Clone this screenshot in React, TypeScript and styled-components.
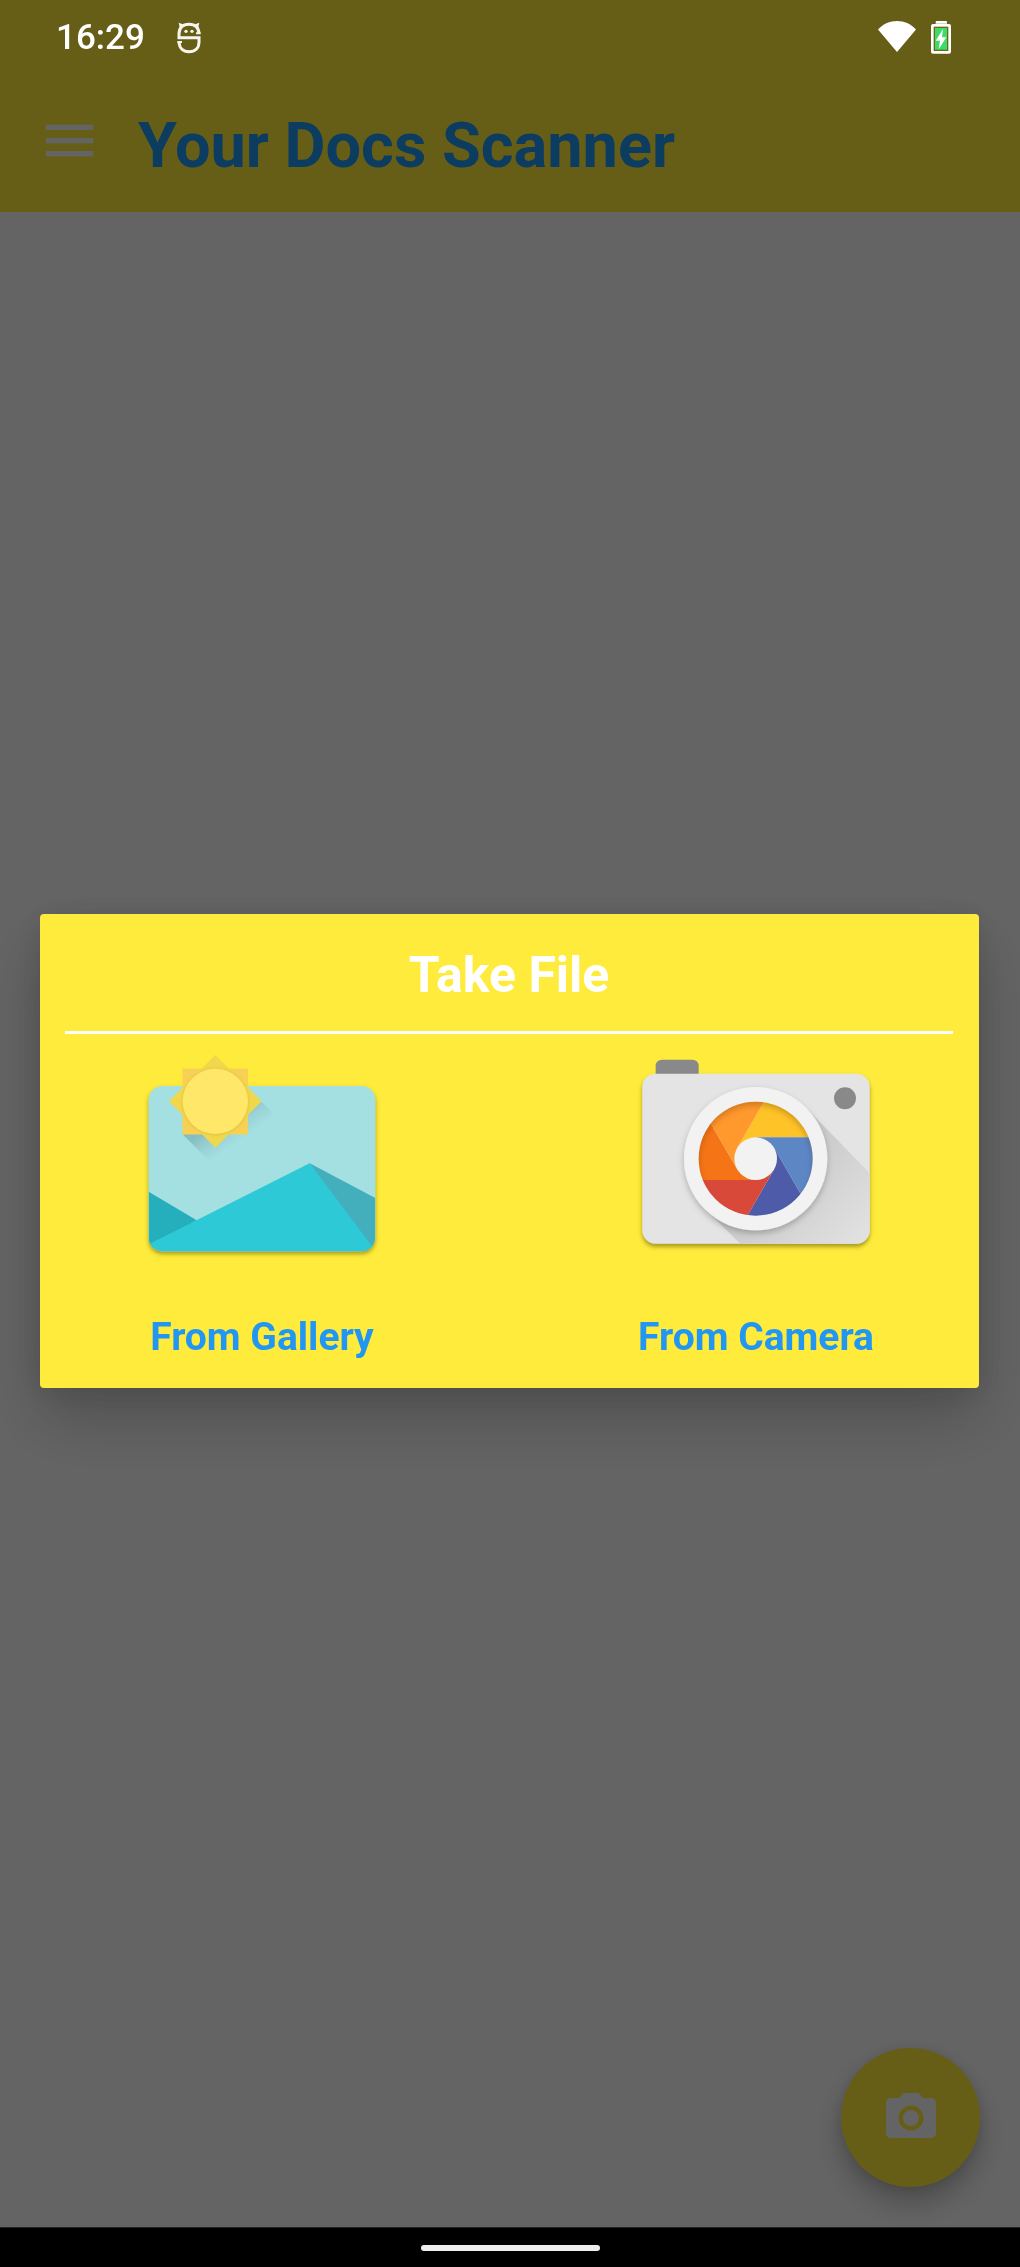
import React from "react";
import styled, { createGlobalStyle } from "styled-components";

const GlobalStyle = createGlobalStyle`
  *, *::before, *::after { box-sizing: border-box; }
  body { margin: 0; background: #000; font-family: Roboto, "Noto Sans", sans-serif; }
  button { font: inherit; border: 0; padding: 0; background: none; color: inherit; cursor: pointer; }
  svg { display: block; flex: none; }
`;

const Screen = styled.div`
  min-height: 100vh;
  display: flex;
  flex-direction: column;
  background: #fafafa;
`;

const Header = styled.header`
  background: #ffeb3b;
`;

const StatusBar = styled.div`
  position: relative;
  z-index: 3;
  height: 75px;
  padding: 0 69px 0 56px;
  display: flex;
  align-items: center;
  justify-content: space-between;
  color: #fff;
`;

const StatusGroup = styled.div<{ $gap: number }>`
  display: flex;
  align-items: center;
  gap: ${(p) => p.$gap}px;
`;

const Clock = styled.time`
  font-size: 35px;
  line-height: 42px;
  font-weight: 500;
`;

const Toolbar = styled.div`
  display: flex;
  align-items: flex-start;
  gap: 37px;
  padding: 34px 38px 29px;
`;

const MenuButton = styled.button`
  color: #fafafa;
`;

const AppTitle = styled.h1`
  margin: 0;
  font-size: 63px;
  line-height: 74px;
  font-weight: 700;
  color: #2196f3;
`;

const Main = styled.main`
  flex: 1;
  display: flex;
  align-items: flex-end;
  justify-content: flex-end;
  padding: 40px;
`;

const Fab = styled.button`
  width: 139px;
  height: 139px;
  border-radius: 50%;
  display: flex;
  align-items: center;
  justify-content: center;
  background: #ffeb3b;
  color: #fafafa;
  box-shadow: 0 16px 28px rgba(0, 0, 0, 0.24), 0 2px 12px rgba(0, 0, 0, 0.1);
`;

const NavBar = styled.footer`
  position: relative;
  z-index: 3;
  height: 40px;
  display: flex;
  align-items: center;
  justify-content: center;
  background: #000;
  border-top: 1px solid #222;
`;

const HomeHandle = styled.span`
  width: 179px;
  height: 6px;
  border-radius: 3px;
  background: #eee;
`;

const Scrim = styled.div`
  position: fixed;
  inset: 0;
  z-index: 2;
  display: flex;
  align-items: center;
  justify-content: center;
  padding: 75px 41px 40px 40px;
  background: rgba(0, 0, 0, 0.6);
`;

const Dialog = styled.section`
  width: 100%;
  padding: 31px 26px 27px 25px;
  border-radius: 4px;
  background: #ffeb3b;
  box-shadow: 0 32px 64px rgba(0, 0, 0, 0.2), 0 4px 32px rgba(0, 0, 0, 0.12);
`;

const DialogTitle = styled.h2`
  margin: 0;
  padding-bottom: 26px;
  border-bottom: 3px solid #fff;
  font-size: 50px;
  line-height: 60px;
  font-weight: 700;
  text-align: center;
  color: #fff;
`;

const Options = styled.div`
  display: grid;
  grid-template-columns: 1fr 1fr;
  column-gap: 100px;
  padding-top: 6px;
`;

const Option = styled.button`
  display: flex;
  flex-direction: column;
  align-items: center;
  gap: 33px;
`;

const OptionLabel = styled.span`
  font-size: 39px;
  line-height: 48px;
  font-weight: 700;
  color: #2196f3;
`;

const MenuIcon = () => (
  <svg width="63" height="63" viewBox="0 0 24 24" fill="currentColor" aria-hidden="true">
    <path d="M3 18h18v-2H3v2zm0-5h18v-2H3v2zm0-7v2h18V6H3z" />
  </svg>
);

const PhotoIcon = () => (
  <svg width="60" height="60" viewBox="0 0 24 24" fill="currentColor" aria-hidden="true">
    <circle cx="12" cy="12" r="3.2" />
    <path d="M9 2 7.17 4H4c-1.1 0-2 .9-2 2v12c0 1.1.9 2 2 2h16c1.1 0 2-.9 2-2V6c0-1.1-.9-2-2-2h-3.17L15 2H9zm3 15c-2.76 0-5-2.24-5-5s2.24-5 5-5 5 2.24 5 5-2.24 5-5 5z" />
  </svg>
);

const MascotIcon = () => (
  <svg width="24" height="32" viewBox="0 0 72 96" fill="none" stroke="#f7f6ec" strokeWidth="9" aria-hidden="true">
    <path d="M66 35C65 17 54 7 36 7S7 17 6 35V47H66V60C66 78 54 89 36 89S7 78 6 60" />
    <path d="M57 34h14M1 60h14" strokeWidth="6" />
    <path d="M5 2 22 8 9 20zM67 2 50 8 63 20z" fill="#f7f6ec" stroke="none" />
    <circle cx="27" cy="28" r="5" fill="#f7f6ec" stroke="none" />
    <circle cx="45" cy="28" r="5" fill="#f7f6ec" stroke="none" />
  </svg>
);

const WifiIcon = () => (
  <svg width="38" height="34" viewBox="0 0 38 34" fill="#fff" aria-hidden="true">
    <path d="M0 8.500C5.500 2.800 11.500 0 19 0s13.500 2.800 19 8.500L19 31z" />
  </svg>
);

const BatteryIcon = () => (
  <svg width="20" height="34" viewBox="0 3 60 102" aria-hidden="true">
    <path d="M14 11V6q0-3 4-3h26q4 0 4 3v5z" fill="#fff" />
    <rect x="0" y="12" width="60" height="89" rx="6" fill="#fff" />
    <rect x="8" y="20" width="44" height="73" fill="#6d6a18" />
    <rect x="12" y="24" width="36" height="65" fill="#3ddc6a" />
    <path d="M36 27 14 62h13l-4 26 23-36H33z" fill="#fff" />
  </svg>
);

const GalleryArt = () => (
  <svg width="280" height="240" viewBox="7 0 840 720" aria-hidden="true">
    <defs>
      <clipPath id="photo">
        <rect x="87" y="138" width="680" height="496" rx="42" />
      </clipPath>
      <linearGradient id="sunShade" gradientUnits="userSpaceOnUse" x1="308" y1="234" x2="358" y2="304">
        <stop offset="0" stopColor="#5f8f96" stopOpacity="0.42" />
        <stop offset="0.5" stopColor="#5f8f96" stopOpacity="0.16" />
        <stop offset="1" stopColor="#5f8f96" stopOpacity="0" />
      </linearGradient>
      <filter id="photoShadow" x="-10%" y="-10%" width="120%" height="125%">
        <feDropShadow dx="0" dy="8" stdDeviation="7" floodColor="#5b5200" floodOpacity="0.55" />
      </filter>
      <filter id="discShadow" x="-10%" y="-10%" width="120%" height="120%">
        <feDropShadow dx="0" dy="1" stdDeviation="4" floodColor="#a87d10" floodOpacity="0.35" />
      </filter>
    </defs>
    <rect x="87" y="138" width="680" height="496" rx="42" fill="#a4dfe2" filter="url(#photoShadow)" />
    <g clipPath="url(#photo)">
      <path d="M190 284 300 394 510 270 426 185z" fill="url(#sunShade)" />
      <path d="M87 455 231 541 87 634z" fill="#25aebc" />
      <path d="M570 370 767 474V634H740z" fill="#44afbc" />
      <path d="M570 370 87 613V640H767V632z" fill="#2dc9d6" />
    </g>
    <rect x="189" y="86" width="196" height="197" fill="#f7d154" />
    <path d="M287 45 426 184 287 323 148 184z" fill="#f1d74b" />
    <path d="M189 143V86h57zM328 86h57v57zM385 226v57h-57zM246 283h-57v-57z" fill="#f7d154" />
    <circle cx="287" cy="184" r="98" fill="#ffe769" filter="url(#discShadow)" />
  </svg>
);

const BLADES = ["#fec327", "#5c87c4", "#4e5ba8", "#d9493a", "#f47416", "#ff982d"];

const CameraArt = () => (
  <svg width="280" height="240" viewBox="-8 0 840 720" aria-hidden="true">
    <defs>
      <clipPath id="body">
        <rect x="71" y="101" width="682" height="510" rx="40" />
      </clipPath>
      <clipPath id="aperture">
        <circle cx="411" cy="356" r="171" />
      </clipPath>
      <linearGradient id="longShade" gradientUnits="userSpaceOnUse" x1="470" y1="415" x2="690" y2="635">
        <stop offset="0" stopColor="#cacaca" />
        <stop offset="1" stopColor="#e1e1e1" />
      </linearGradient>
      <filter id="bodyShadow" x="-10%" y="-10%" width="120%" height="125%">
        <feDropShadow dx="0" dy="9" stdDeviation="6" floodColor="#5b5200" floodOpacity="0.55" />
      </filter>
      <filter id="ringShadow" x="-15%" y="-15%" width="130%" height="135%">
        <feDropShadow dx="0" dy="9" stdDeviation="9" floodColor="#000" floodOpacity="0.24" />
      </filter>
      <filter id="soften" x="-20%" y="-20%" width="140%" height="140%">
        <feGaussianBlur stdDeviation="10" />
      </filter>
    </defs>
    <path d="M111 110V79q0-20 20-20h89q20 0 20 20v31z" fill="#898989" />
    <rect x="71" y="101" width="682" height="510" rx="40" fill="#e4e4e4" filter="url(#bodyShadow)" />
    <g clipPath="url(#body)">
      <path d="M563 204 753 400V611H365L259 508z" fill="url(#longShade)" />
    </g>
    <circle cx="679" cy="175" r="33" fill="#898989" />
    <circle cx="411" cy="356" r="215" fill="#f2f2f2" filter="url(#ringShadow)" />
    <g clipPath="url(#aperture)">
      {BLADES.map((color, i) => (
        <path
          key={color}
          d="M355.600 324 446 167.400Q590 170 600 292H411z"
          fill={color}
          transform={`rotate(${i * 60} 411 356)`}
        />
      ))}
      <circle cx="411" cy="367" r="183" fill="none" stroke="#5a2500" strokeOpacity="0.4" strokeWidth="16" filter="url(#soften)" />
    </g>
    <circle cx="411" cy="356" r="64" fill="#f2f2f2" />
  </svg>
);

export default function App() {
  return (
    <Screen>
      <GlobalStyle />
      <Header>
        <StatusBar>
          <StatusGroup $gap={32}>
            <Clock>16:29</Clock>
            <MascotIcon />
          </StatusGroup>
          <StatusGroup $gap={15}>
            <WifiIcon />
            <BatteryIcon />
          </StatusGroup>
        </StatusBar>
        <Toolbar>
          <MenuButton type="button" aria-label="Open menu">
            <MenuIcon />
          </MenuButton>
          <AppTitle>Your Docs Scanner</AppTitle>
        </Toolbar>
      </Header>
      <Main>
        <Fab type="button" aria-label="Scan a document">
          <PhotoIcon />
        </Fab>
      </Main>
      <NavBar>
        <HomeHandle />
      </NavBar>
      <Scrim>
        <Dialog role="dialog" aria-modal="true" aria-labelledby="take-file">
          <DialogTitle id="take-file">Take File</DialogTitle>
          <Options>
            <Option type="button">
              <GalleryArt />
              <OptionLabel>From Gallery</OptionLabel>
            </Option>
            <Option type="button">
              <CameraArt />
              <OptionLabel>From Camera</OptionLabel>
            </Option>
          </Options>
        </Dialog>
      </Scrim>
    </Screen>
  );
}
